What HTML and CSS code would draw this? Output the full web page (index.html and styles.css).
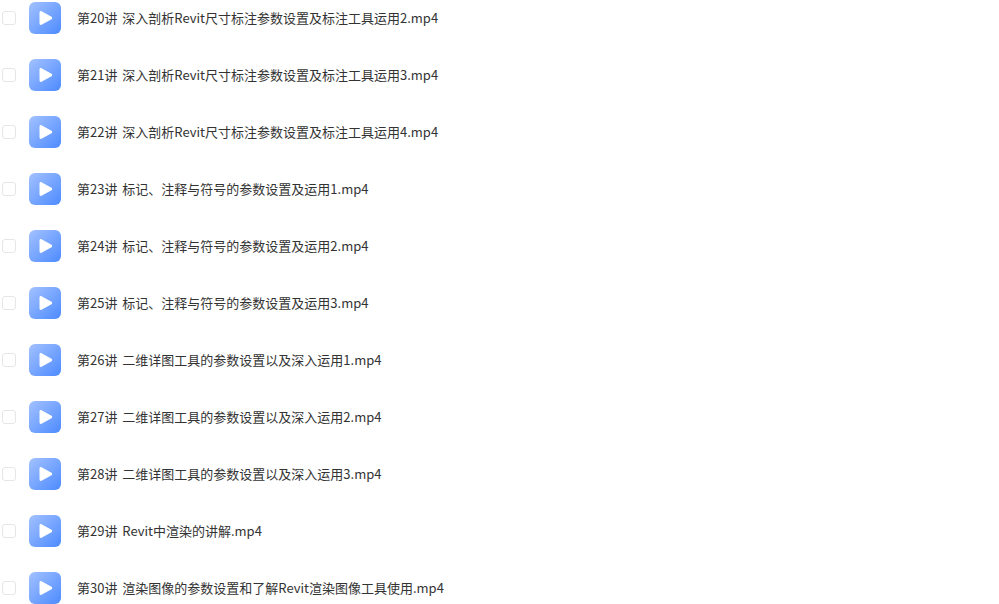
FILE: index.html
```html
<!DOCTYPE html>
<html lang="zh-CN">
<head>
<meta charset="utf-8">
<title>文件列表</title>
<link rel="stylesheet" href="styles.css">
</head>
<body>
<svg class="defs" width="0" height="0" aria-hidden="true"><defs><linearGradient id="g" x1="0" y1="0" x2="1" y2="1"><stop offset="0" stop-color="#a3c1ff"/><stop offset="1" stop-color="#4d8bff"/></linearGradient><symbol id="video" viewBox="0 0 32 32"><rect width="32" height="32" rx="6" fill="url(#g)"/><path d="M10.500 10.500c0-1.100 1.100-1.800 2-1.200l10 5.400c.9.500.9 2.100 0 2.600l-10 5.400c-.9.600-2-.1-2-1.200z" fill="#fff"/></symbol></defs></svg>
<ul class="list">
<li class="row"><span class="check"></span><svg class="icon"><use href="#video"/></svg><span class="name">第20讲 深入剖析Revit尺寸标注参数设置及标注工具运用2.mp4</span></li>
<li class="row"><span class="check"></span><svg class="icon"><use href="#video"/></svg><span class="name">第21讲 深入剖析Revit尺寸标注参数设置及标注工具运用3.mp4</span></li>
<li class="row"><span class="check"></span><svg class="icon"><use href="#video"/></svg><span class="name">第22讲 深入剖析Revit尺寸标注参数设置及标注工具运用4.mp4</span></li>
<li class="row"><span class="check"></span><svg class="icon"><use href="#video"/></svg><span class="name">第23讲 标记、注释与符号的参数设置及运用1.mp4</span></li>
<li class="row"><span class="check"></span><svg class="icon"><use href="#video"/></svg><span class="name">第24讲 标记、注释与符号的参数设置及运用2.mp4</span></li>
<li class="row"><span class="check"></span><svg class="icon"><use href="#video"/></svg><span class="name">第25讲 标记、注释与符号的参数设置及运用3.mp4</span></li>
<li class="row"><span class="check"></span><svg class="icon"><use href="#video"/></svg><span class="name">第26讲 二维详图工具的参数设置以及深入运用1.mp4</span></li>
<li class="row"><span class="check"></span><svg class="icon"><use href="#video"/></svg><span class="name">第27讲 二维详图工具的参数设置以及深入运用2.mp4</span></li>
<li class="row"><span class="check"></span><svg class="icon"><use href="#video"/></svg><span class="name">第28讲 二维详图工具的参数设置以及深入运用3.mp4</span></li>
<li class="row"><span class="check"></span><svg class="icon"><use href="#video"/></svg><span class="name">第29讲 Revit中渲染的讲解.mp4</span></li>
<li class="row"><span class="check"></span><svg class="icon"><use href="#video"/></svg><span class="name">第30讲 渲染图像的参数设置和了解Revit渲染图像工具使用.mp4</span></li>
</ul>
</body>
</html>
```
FILE: styles.css
```css
html, body {
  margin: 0;
  height: 100%;
  background: #fff;
  overflow: hidden;
}
.defs {
  display: block;
  height: 0;
}
.list {
  list-style: none;
  margin: 0;
  padding: 2px 0 0 2px;
  display: flex;
  flex-direction: column;
  gap: 25px;
}
.row {
  display: flex;
  align-items: center;
  height: 32px;
}
.check {
  width: 14px;
  height: 14px;
  box-sizing: border-box;
  border: 1px solid #e6e6e6;
  border-radius: 3px;
  background: #fff;
  flex: none;
}
.icon {
  width: 32px;
  height: 32px;
  margin-left: 13px;
  flex: none;
}
.name {
  margin-left: 16px;
  font: 13px/20px "Noto Sans CJK SC", "Noto Sans", sans-serif;
  word-spacing: 2px;
  color: #333;
  white-space: nowrap;
}
```
